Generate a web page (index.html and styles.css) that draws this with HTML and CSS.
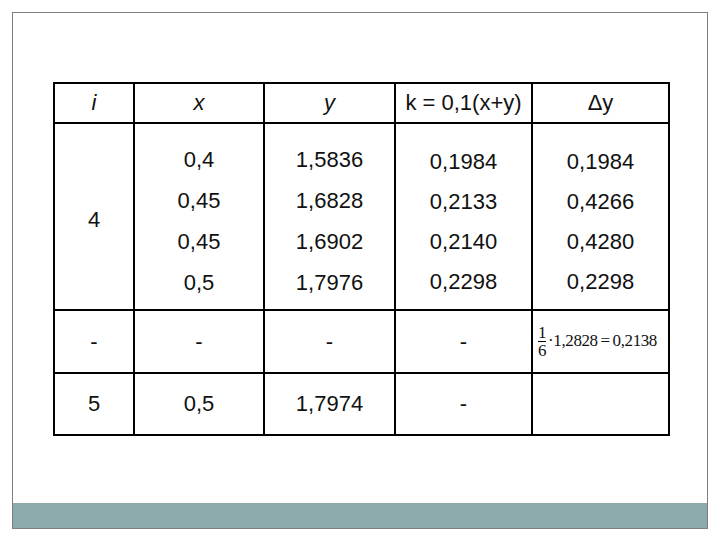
FILE: index.html
```html
<!DOCTYPE html>
<html lang="ru">
<head>
  <meta charset="UTF-8" />
  <title>Таблица</title>
  <link rel="stylesheet" href="styles.css">
</head>
<body>
  <div class="slide">
    <div class="content">
      <table class="grid">
        <colgroup>
          <col class="c-i"><col class="c-x"><col class="c-y"><col class="c-k"><col class="c-d">
        </colgroup>
        <tr class="head">
          <td><i>i</i></td>
          <td><i>x</i></td>
          <td><i>y</i></td>
          <td>k = 0,1(x+y)</td>
          <td>&Delta;y</td>
        </tr>
        <tr class="big">
          <td class="mid">4</td>
          <td><div>0,4</div><div>0,45</div><div>0,45</div><div>0,5</div></td>
          <td><div>1,5836</div><div>1,6828</div><div>1,6902</div><div>1,7976</div></td>
          <td class="shift"><div>0,1984</div><div>0,2133</div><div>0,2140</div><div>0,2298</div></td>
          <td class="shift"><div>0,1984</div><div>0,4266</div><div>0,4280</div><div>0,2298</div></td>
        </tr>
        <tr class="dash">
          <td>-</td>
          <td>-</td>
          <td>-</td>
          <td>-</td>
          <td class="formula">
            <span class="frac"><span>1</span><span class="den">6</span></span><span>&middot;1,2828 = 0,2138</span>
          </td>
        </tr>
        <tr class="last">
          <td>5</td>
          <td>0,5</td>
          <td>1,7974</td>
          <td>-</td>
          <td></td>
        </tr>
      </table>
    </div>
    <div class="footer"></div>
  </div>
</body>
</html>
```

FILE: styles.css
```css
body {
  margin: 0;
  background: #fff;
  font-family: "Liberation Sans", Arial, sans-serif;
}

.slide {
  width: 694px;
  height: 515px;
  margin: 12px 0 0 12px;
  border: 1px solid #7f7f7f;
  display: flex;
  flex-direction: column;
}

.content {
  flex: 1;
  padding: 69px 0 0 40px;
}

.footer {
  height: 25px;
  background: #8dabab;
}

.grid {
  border-collapse: collapse;
  table-layout: fixed;
  width: 615px;
  font-size: 22px;
  color: #111;
}

.c-i { width: 80px; }
.c-x { width: 130px; }
.c-y { width: 131px; }
.c-k { width: 137px; }
.c-d { width: 137px; }

.grid td {
  border: 2px solid #000;
  text-align: center;
  padding: 0;
}

.head {
  height: 40px;
}

.big {
  height: 187px;
}

.big td {
  vertical-align: top;
  padding-top: 15px;
  line-height: 41px;
}

.big td.mid {
  vertical-align: middle;
  padding-top: 5px;
}

.big td.shift {
  padding-top: 18px;
  line-height: 40px;
}

.dash {
  height: 63px;
}

.last {
  height: 62px;
}

.formula {
  text-align: left !important;
  padding-left: 5px !important;
  font-family: "Liberation Serif", "Times New Roman", serif;
  font-size: 17px;
  letter-spacing: -0.4px;
  word-spacing: -1px;
  white-space: nowrap;
}

.frac {
  display: inline-flex;
  flex-direction: column;
  vertical-align: middle;
  text-align: center;
  font-size: 17px;
  line-height: 16px;
  margin-right: 2px;
}

.frac .den {
  border-top: 1px solid #000;
  padding-top: 1px;
}
```
